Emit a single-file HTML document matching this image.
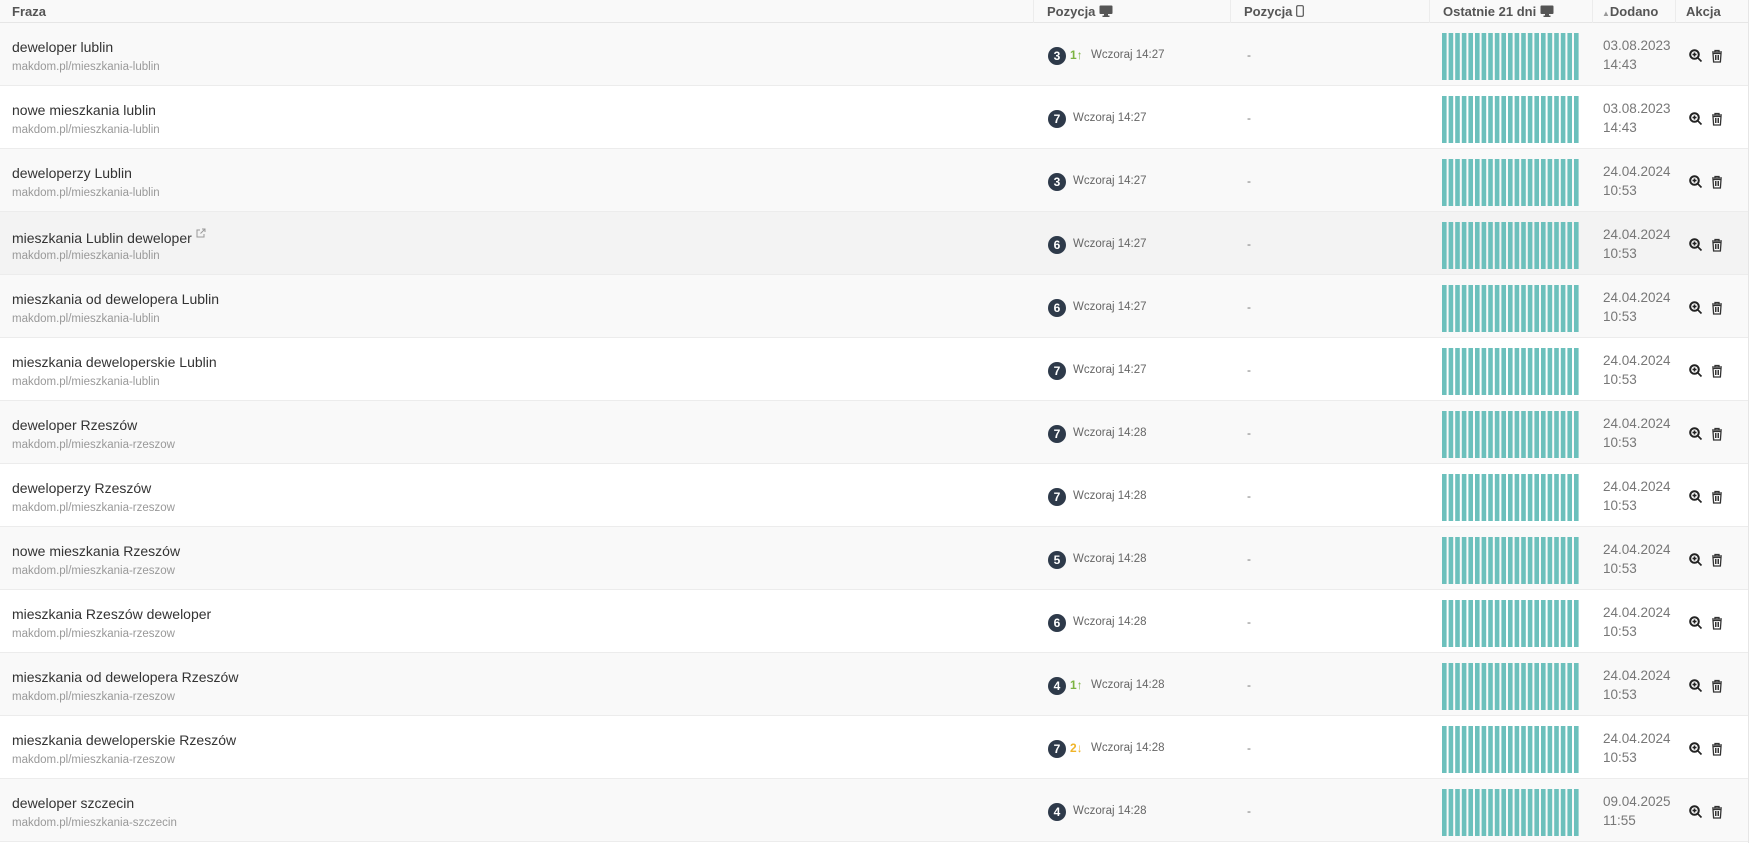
<!DOCTYPE html>
<html><head><meta charset="utf-8"><style>
*{margin:0;padding:0;box-sizing:border-box}
body{width:1751px;height:843px;overflow:hidden;background:#fff;font-family:"Liberation Sans",Arial,sans-serif;position:relative}
.hd{position:absolute;left:0;top:0;width:1749px;height:23px;background:#f9f9f9;border-bottom:1px solid #e6e6e6;font-weight:bold;font-size:13px;color:#555}
.hd span{position:absolute;top:4px}
.vs{position:absolute;top:0;height:23px;border-left:1px solid #ececec}
.row{position:absolute;left:0;width:1749px;height:63px;border-bottom:1px solid #ececec}
.row:nth-child(odd){background:#f9f9f9}
.row:nth-child(even){background:#fff}
.p{position:absolute;left:12px;top:16px;font-size:14px;color:#333}
.u{position:absolute;left:12px;top:38px;font-size:11.5px;color:#999}
.b{position:absolute;left:1048px;top:24px;width:18px;height:18px;border-radius:50%;background:#2e3a4a;color:#fff;font-size:12px;font-weight:bold;text-align:center;line-height:18px}
.ar{position:absolute;left:1070px;top:25px;font-size:12px;font-weight:bold}
.w{position:absolute;top:26px;font-size:11.5px;color:#666}
.d{position:absolute;left:1247px;top:25px;font-size:12px;color:#777}
.bars{position:absolute;left:1442px;top:10px;width:139px;height:47px}
.dt{position:absolute;left:1603px;top:13px;font-size:13.5px;color:#777;line-height:19px}
.ic{position:absolute;left:1689px;top:26px}
</style></head><body>
<svg width="0" height="0" style="position:absolute"><defs><g id="bb"><rect x="0" y="0" width="4.6" height="47"/><rect x="6.6" y="0" width="4.6" height="47"/><rect x="13.2" y="0" width="4.6" height="47"/><rect x="19.8" y="0" width="4.6" height="47"/><rect x="26.4" y="0" width="4.6" height="47"/><rect x="33" y="0" width="4.6" height="47"/><rect x="39.6" y="0" width="4.6" height="47"/><rect x="46.2" y="0" width="4.6" height="47"/><rect x="52.8" y="0" width="4.6" height="47"/><rect x="59.4" y="0" width="4.6" height="47"/><rect x="66" y="0" width="4.6" height="47"/><rect x="72.6" y="0" width="4.6" height="47"/><rect x="79.2" y="0" width="4.6" height="47"/><rect x="85.8" y="0" width="4.6" height="47"/><rect x="92.4" y="0" width="4.6" height="47"/><rect x="99" y="0" width="4.6" height="47"/><rect x="105.6" y="0" width="4.6" height="47"/><rect x="112.2" y="0" width="4.6" height="47"/><rect x="118.8" y="0" width="4.6" height="47"/><rect x="125.4" y="0" width="4.6" height="47"/><rect x="132" y="0" width="4.6" height="47"/></g>
<g id="ic"><circle cx="5.5" cy="5.5" r="4.3" fill="none" stroke="#222" stroke-width="2"/><path d="M8.5 8.5l4 4M3.5 5.5h4M5.5 3.5v4" stroke="#222" stroke-width="1.6"/><path d="M23 3h10M26 3V1.5h4V3M24 4.5h8l-.6 8.5h-6.8z" fill="none" stroke="#333" stroke-width="1.3"/><path d="M26.5 6v5M28 6v5M29.5 6v5" stroke="#333" stroke-width="1"/></g></defs></svg>
<div class="hd">
<span style="left:12px">Fraza</span>
<div class="vs" style="left:1033px"></div>
<span style="left:1047px">Pozycja <svg width="14" height="12" viewBox="0 0 14 12" style="vertical-align:-1px"><rect x="0.5" y="0.5" width="13" height="8.5" rx="1" fill="#555"/><rect x="5" y="9" width="4" height="2" fill="#555"/><rect x="3.5" y="10.5" width="7" height="1.5" fill="#555"/></svg></span>
<div class="vs" style="left:1230px"></div>
<span style="left:1244px">Pozycja <svg width="8" height="12" viewBox="0 0 8 12" style="vertical-align:-1px"><rect x="0.7" y="0.7" width="6.6" height="10.6" rx="1.3" fill="none" stroke="#555" stroke-width="1.2"/></svg></span>
<div class="vs" style="left:1429px"></div>
<span style="left:1443px">Ostatnie 21 dni <svg width="14" height="12" viewBox="0 0 14 12" style="vertical-align:-1px"><rect x="0.5" y="0.5" width="13" height="8.5" rx="1" fill="#555"/><rect x="5" y="9" width="4" height="2" fill="#555"/><rect x="3.5" y="10.5" width="7" height="1.5" fill="#555"/></svg></span>
<div class="vs" style="left:1592px"></div>
<span style="left:1602px"><span style="position:static;font-size:8px;color:#999">▲</span>Dodano</span>
<div class="vs" style="left:1675px"></div>
<span style="left:1686px">Akcja</span>
</div>
<div style="position:absolute;left:0;top:23px">
<div class="row" style="top:0"><div class="p">deweloper lublin</div><div class="u">makdom.pl/mieszkania-lublin</div><div class="b">3</div><div class="ar" style="color:#7cb342">1↑</div><div class="w" style="left:1091px">Wczoraj 14:27</div><div class="d">-</div><svg class="bars" fill="#6cc0bc"><use href="#bb"/></svg><div class="dt">03.08.2023<br>14:43</div><svg class="ic" width="36" height="14"><use href="#ic"/></svg></div>
<div class="row" style="top:63px"><div class="p">nowe mieszkania lublin</div><div class="u">makdom.pl/mieszkania-lublin</div><div class="b">7</div><div class="w" style="left:1073px">Wczoraj 14:27</div><div class="d">-</div><svg class="bars" fill="#6cc0bc"><use href="#bb"/></svg><div class="dt">03.08.2023<br>14:43</div><svg class="ic" width="36" height="14"><use href="#ic"/></svg></div>
<div class="row" style="top:126px"><div class="p">deweloperzy Lublin</div><div class="u">makdom.pl/mieszkania-lublin</div><div class="b">3</div><div class="w" style="left:1073px">Wczoraj 14:27</div><div class="d">-</div><svg class="bars" fill="#6cc0bc"><use href="#bb"/></svg><div class="dt">24.04.2024<br>10:53</div><svg class="ic" width="36" height="14"><use href="#ic"/></svg></div>
<div class="row" style="top:189px;background:#f3f3f3"><div class="p">mieszkania Lublin deweloper <svg width="10" height="10" viewBox="0 0 10 10" style="vertical-align:5px"><path d="M4 2H1v7h7V6M6 1h3v3M9 1L4.5 5.5" fill="none" stroke="#999" stroke-width="1"/></svg></div><div class="u">makdom.pl/mieszkania-lublin</div><div class="b">6</div><div class="w" style="left:1073px">Wczoraj 14:27</div><div class="d">-</div><svg class="bars" fill="#6cc0bc"><use href="#bb"/></svg><div class="dt">24.04.2024<br>10:53</div><svg class="ic" width="36" height="14"><use href="#ic"/></svg></div>
<div class="row" style="top:252px"><div class="p">mieszkania od dewelopera Lublin</div><div class="u">makdom.pl/mieszkania-lublin</div><div class="b">6</div><div class="w" style="left:1073px">Wczoraj 14:27</div><div class="d">-</div><svg class="bars" fill="#6cc0bc"><use href="#bb"/></svg><div class="dt">24.04.2024<br>10:53</div><svg class="ic" width="36" height="14"><use href="#ic"/></svg></div>
<div class="row" style="top:315px"><div class="p">mieszkania deweloperskie Lublin</div><div class="u">makdom.pl/mieszkania-lublin</div><div class="b">7</div><div class="w" style="left:1073px">Wczoraj 14:27</div><div class="d">-</div><svg class="bars" fill="#6cc0bc"><use href="#bb"/></svg><div class="dt">24.04.2024<br>10:53</div><svg class="ic" width="36" height="14"><use href="#ic"/></svg></div>
<div class="row" style="top:378px"><div class="p">deweloper Rzeszów</div><div class="u">makdom.pl/mieszkania-rzeszow</div><div class="b">7</div><div class="w" style="left:1073px">Wczoraj 14:28</div><div class="d">-</div><svg class="bars" fill="#6cc0bc"><use href="#bb"/></svg><div class="dt">24.04.2024<br>10:53</div><svg class="ic" width="36" height="14"><use href="#ic"/></svg></div>
<div class="row" style="top:441px"><div class="p">deweloperzy Rzeszów</div><div class="u">makdom.pl/mieszkania-rzeszow</div><div class="b">7</div><div class="w" style="left:1073px">Wczoraj 14:28</div><div class="d">-</div><svg class="bars" fill="#6cc0bc"><use href="#bb"/></svg><div class="dt">24.04.2024<br>10:53</div><svg class="ic" width="36" height="14"><use href="#ic"/></svg></div>
<div class="row" style="top:504px"><div class="p">nowe mieszkania Rzeszów</div><div class="u">makdom.pl/mieszkania-rzeszow</div><div class="b">5</div><div class="w" style="left:1073px">Wczoraj 14:28</div><div class="d">-</div><svg class="bars" fill="#6cc0bc"><use href="#bb"/></svg><div class="dt">24.04.2024<br>10:53</div><svg class="ic" width="36" height="14"><use href="#ic"/></svg></div>
<div class="row" style="top:567px"><div class="p">mieszkania Rzeszów deweloper</div><div class="u">makdom.pl/mieszkania-rzeszow</div><div class="b">6</div><div class="w" style="left:1073px">Wczoraj 14:28</div><div class="d">-</div><svg class="bars" fill="#6cc0bc"><use href="#bb"/></svg><div class="dt">24.04.2024<br>10:53</div><svg class="ic" width="36" height="14"><use href="#ic"/></svg></div>
<div class="row" style="top:630px"><div class="p">mieszkania od dewelopera Rzeszów</div><div class="u">makdom.pl/mieszkania-rzeszow</div><div class="b">4</div><div class="ar" style="color:#7cb342">1↑</div><div class="w" style="left:1091px">Wczoraj 14:28</div><div class="d">-</div><svg class="bars" fill="#6cc0bc"><use href="#bb"/></svg><div class="dt">24.04.2024<br>10:53</div><svg class="ic" width="36" height="14"><use href="#ic"/></svg></div>
<div class="row" style="top:693px"><div class="p">mieszkania deweloperskie Rzeszów</div><div class="u">makdom.pl/mieszkania-rzeszow</div><div class="b">7</div><div class="ar" style="color:#f0b429">2↓</div><div class="w" style="left:1091px">Wczoraj 14:28</div><div class="d">-</div><svg class="bars" fill="#6cc0bc"><use href="#bb"/></svg><div class="dt">24.04.2024<br>10:53</div><svg class="ic" width="36" height="14"><use href="#ic"/></svg></div>
<div class="row" style="top:756px"><div class="p">deweloper szczecin</div><div class="u">makdom.pl/mieszkania-szczecin</div><div class="b">4</div><div class="w" style="left:1073px">Wczoraj 14:28</div><div class="d">-</div><svg class="bars" fill="#6cc0bc"><use href="#bb"/></svg><div class="dt">09.04.2025<br>11:55</div><svg class="ic" width="36" height="14"><use href="#ic"/></svg></div>
</div>
<div style="position:absolute;left:1748px;top:0;width:1px;height:843px;background:#e6e6e6"></div>
</body></html>
